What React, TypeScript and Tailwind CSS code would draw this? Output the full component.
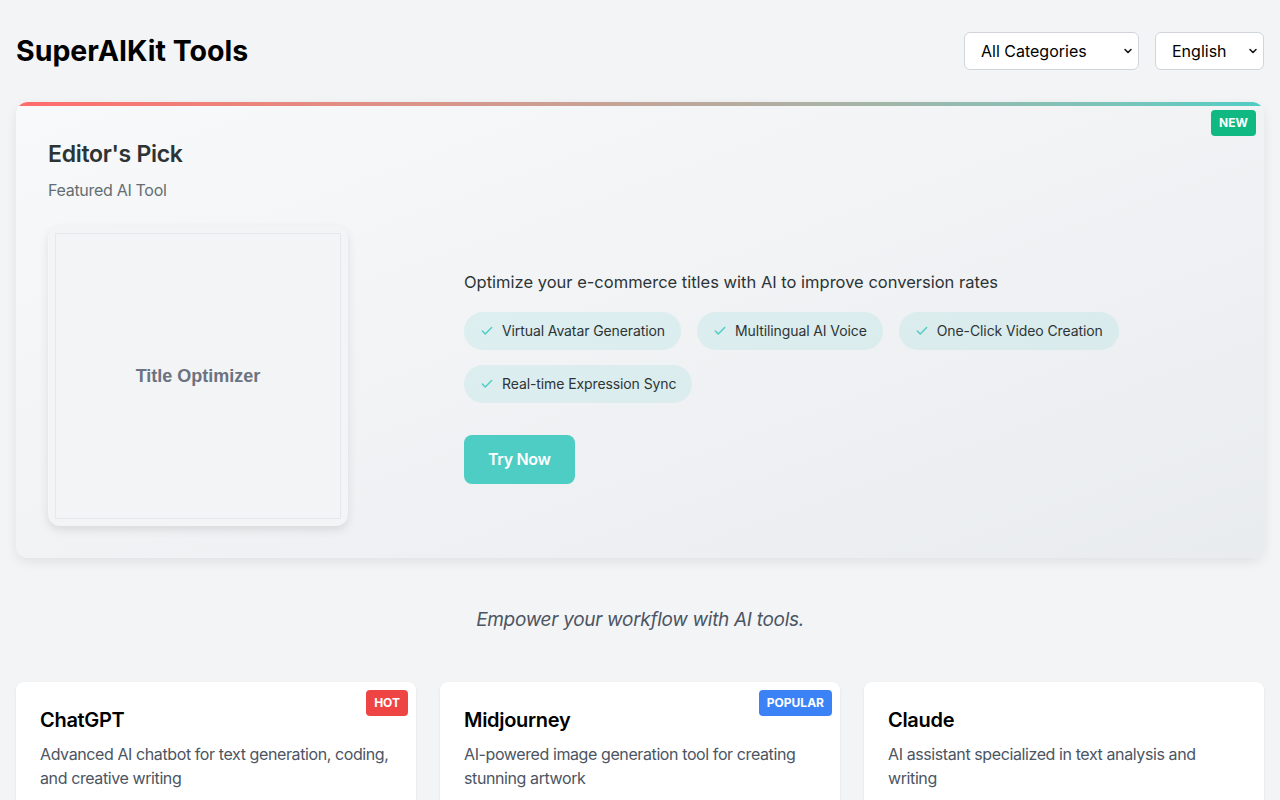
import React from "react";

const Check = () => (
  <svg width="14" height="14" viewBox="0 0 24 24" fill="none" stroke="#4ecdc4" strokeWidth="2.5" strokeLinecap="round" strokeLinejoin="round">
    <path d="M20 6 9 17l-5-5" />
  </svg>
);

const Chevron = () => (
  <svg width="12" height="12" viewBox="0 0 24 24" fill="none" stroke="#111" strokeWidth="3" strokeLinecap="round" strokeLinejoin="round">
    <path d="m6 9 6 6 6-6" />
  </svg>
);

function Select({ label, width }: { label: string; width: string }) {
  return (
    <div className={`relative ${width}`}>
      <select className="w-full h-[38px] appearance-none rounded-md border border-[#d1d5db] bg-white pl-4 pr-8 text-base text-black outline-none">
        <option>{label}</option>
      </select>
      <span className="pointer-events-none absolute right-[5px] top-1/2 -translate-y-1/2">
        <Chevron />
      </span>
    </div>
  );
}

const features = [
  "Virtual Avatar Generation",
  "Multilingual AI Voice",
  "One-Click Video Creation",
  "Real-time Expression Sync",
];

const tools = [
  { name: "ChatGPT", desc: "Advanced AI chatbot for text generation, coding, and creative writing", badge: "HOT", color: "bg-[#ef4444]" },
  { name: "Midjourney", desc: "AI-powered image generation tool for creating stunning artwork", badge: "POPULAR", color: "bg-[#3b82f6]" },
  { name: "Claude", desc: "AI assistant specialized in text analysis and writing", badge: "", color: "" },
];

export default function App() {
  return (
    <div className="min-h-screen bg-[#f3f4f6] p-4 font-['Inter','Noto_Sans',sans-serif]">
      <header className="flex items-center justify-between py-4 mb-4">
        <h1 className="text-[28.5px] font-bold leading-9 text-black">SuperAIKit Tools</h1>
        <div className="flex gap-4">
          <Select label="All Categories" width="w-[175px]" />
          <Select label="English" width="w-[109px]" />
        </div>
      </header>

      <section className="relative overflow-hidden rounded-xl bg-gradient-to-br from-[#f8f9fa] to-[#e9ecef] shadow-[0_4px_12px_rgba(0,0,0,0.08)]">
        <div className="h-1 bg-gradient-to-r from-[#ff6b6b] to-[#4ecdc4]" />
        <span className="absolute right-2 top-2 rounded bg-[#10b981] px-2 py-1 text-xs font-bold leading-[18px] text-white">NEW</span>
        <div className="px-8 pt-8 pb-8">
          <h2 className="text-[23px] font-semibold leading-8 tracking-[-0.3px] text-[#2d3436]">Editor's Pick</h2>
          <p className="mt-2 text-base leading-6 tracking-[-0.3px] text-[#636e72]">Featured AI Tool</p>
          <div className="mt-6 grid grid-cols-[1fr_2fr] items-center gap-8">
            <div className="h-[300px] w-[300px] rounded-xl bg-[#f3f4f6] p-[7px] shadow-[0_4px_10px_rgba(0,0,0,0.1)]">
              <div className="flex h-full w-full items-center justify-center border border-[#e5e7eb]">
                <span className="font-['Liberation_Sans',Arial,sans-serif] text-lg font-bold text-[#6b7280]">Title Optimizer</span>
              </div>
            </div>
            <div>
              <p className="text-[16.5px] leading-7 text-[#2d3436]">Optimize your e-commerce titles with AI to improve conversion rates</p>
              <div className="mt-4 flex flex-wrap gap-x-4 gap-y-[15px]">
                {features.map((f) => (
                  <span key={f} className="flex items-center gap-2 rounded-full bg-[rgba(78,205,196,0.12)] px-4 py-[9px] text-sm leading-5 tracking-[-0.1px] text-[#2d3436]">
                    <Check />
                    {f}
                  </span>
                ))}
              </div>
              <button className="mt-8 rounded-lg bg-[#4ecdc4] px-6 py-3 text-base font-semibold leading-[25px] tracking-[-0.3px] text-white">Try Now</button>
            </div>
          </div>
        </div>
      </section>

      <p className="my-12 text-center text-[19px] italic leading-7 tracking-[-0.3px] text-[#4b5563]">Empower your workflow with AI tools.</p>

      <div className="grid grid-cols-3 gap-6">
        {tools.map((t) => (
          <div key={t.name} className="relative rounded-lg bg-white p-6 shadow-[0_1px_3px_rgba(0,0,0,0.08)]">
            {t.badge && (
              <span className={`absolute right-2 top-2 rounded ${t.color} px-2 py-1 text-xs font-bold leading-[18px] text-white`}>{t.badge}</span>
            )}
            <h3 className="text-xl font-semibold leading-7 tracking-[-0.3px] text-black">{t.name}</h3>
            <p className="mt-2 text-base leading-6 tracking-[-0.4px] text-[#4b5563]">{t.desc}</p>
            <div className="h-10" />
          </div>
        ))}
      </div>
    </div>
  );
}
